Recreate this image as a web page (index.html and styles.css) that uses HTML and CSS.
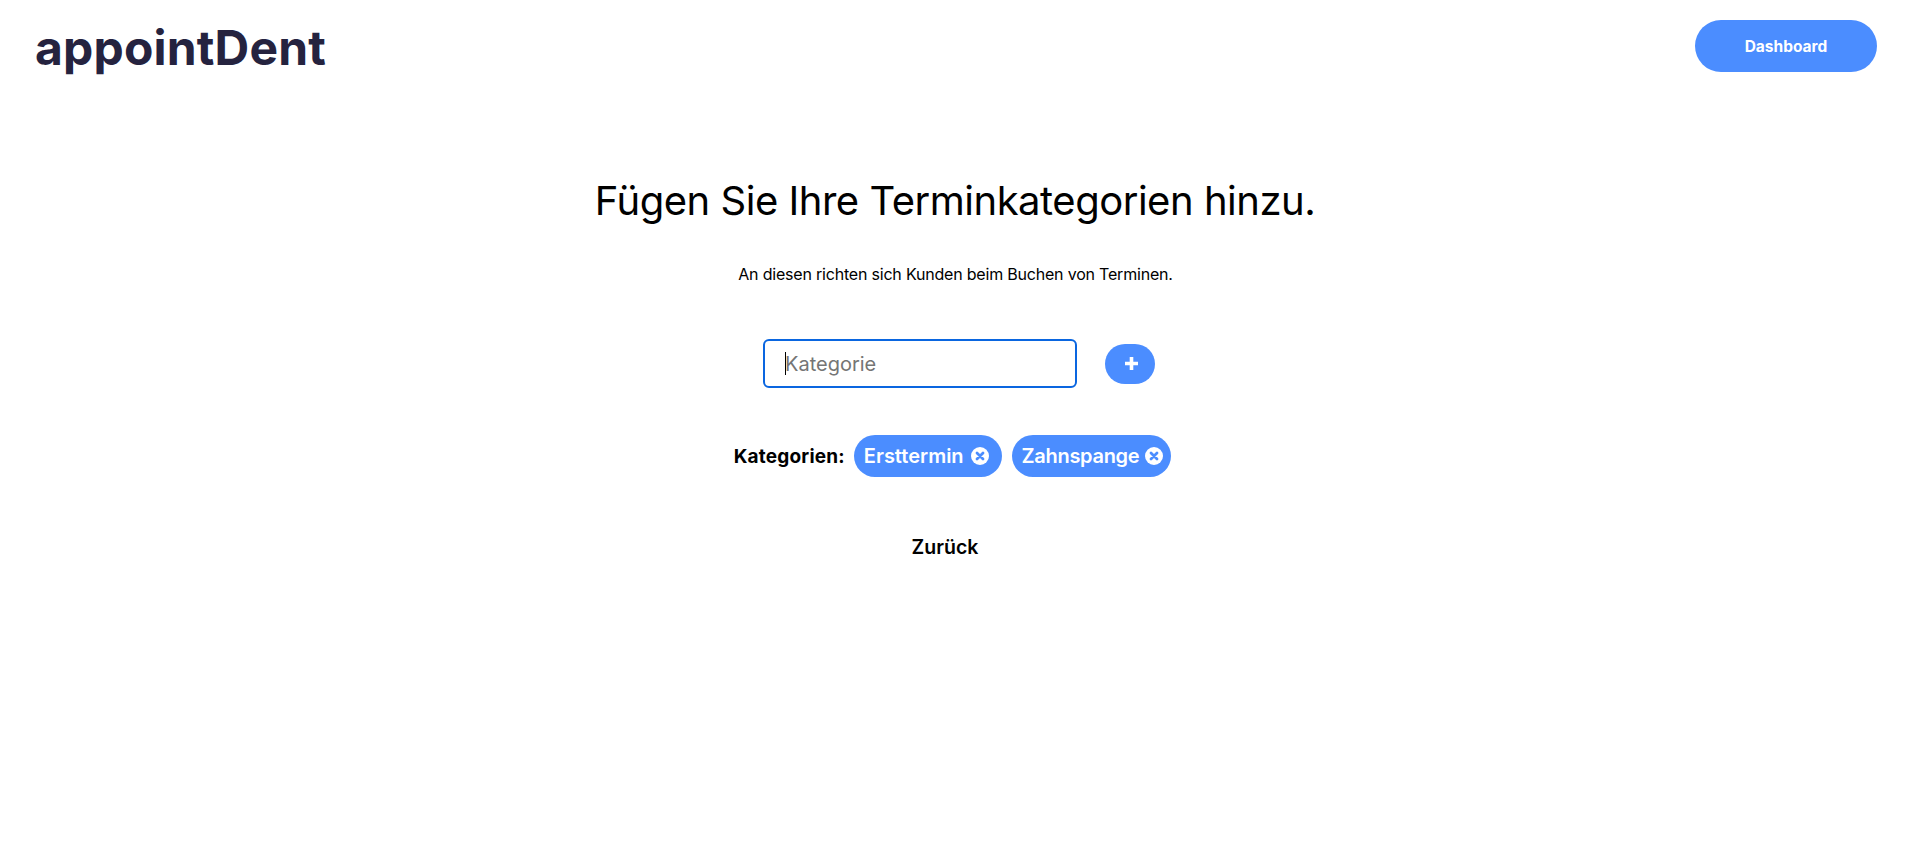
FILE: index.html
```html
<!DOCTYPE html>
<html lang="de">
<head>
  <meta charset="UTF-8" />
  <title>appointDent</title>
  <link rel="stylesheet" href="styles.css">
</head>
<body>

  <header class="topbar">
    <a class="logo" href="#">appointDent</a>
    <button class="dashboard-btn">Dashboard</button>
  </header>

  <main class="content">
    <h1>Fügen Sie Ihre Terminkategorien hinzu.</h1>
    <p class="subtitle">An diesen richten sich Kunden beim Buchen von Terminen.</p>

    <div class="add-row">
      <div class="input-wrap">
        <input class="category-input" type="text" placeholder="Kategorie">
        <span class="caret"></span>
      </div>
      <button class="add-btn" aria-label="Hinzufügen">
        <svg width="13" height="13" viewBox="0 0 13 13"><path d="M6.5 0v13M0 6.500h13" stroke="#fff" stroke-width="3.6" fill="none"/></svg>
      </button>
    </div>

    <div class="chips">
      <span class="chips-label">Kategorien:</span>
      <span class="chip">Ersttermin
        <svg class="chip-x" width="18" height="18" viewBox="0 0 18 18"><circle cx="9" cy="9" r="9" fill="#fff"/><path d="M6 6l6 6M12 6l-6 6" stroke="#4b8dff" stroke-width="2.8" stroke-linecap="round"/></svg>
      </span>
      <span class="chip chip-tight">Zahnspange
        <svg class="chip-x" width="18" height="18" viewBox="0 0 18 18"><circle cx="9" cy="9" r="9" fill="#fff"/><path d="M6 6l6 6M12 6l-6 6" stroke="#4b8dff" stroke-width="2.8" stroke-linecap="round"/></svg>
      </span>
    </div>

    <a class="back-link" href="#">Zurück</a>
  </main>

</body>
</html>
```

FILE: styles.css
```css
body {
  font-family: Inter, 'Noto Sans', sans-serif;
  margin: 0;
  background: #fff;
  color: #000;
}
.topbar {
  display: flex;
  justify-content: space-between;
  align-items: flex-start;
  padding: 20px 38px 0 35px;
}
.logo {
  color: #25233f;
  font-size: 48px;
  line-height: 56px;
  font-weight: 700;
  letter-spacing: 0.17px;
  text-decoration: none;
}
.dashboard-btn {
  width: 182px;
  height: 52px;
  background: #4b8dff;
  color: #fff;
  border: none;
  border-radius: 26px;
  font: 700 15.5px Inter, sans-serif;
}
.content {
  display: flex;
  flex-direction: column;
  align-items: center;
}
h1 {
  margin: 100px 5px 0 0;
  font-size: 40px;
  line-height: 50px;
  font-weight: 400;
  letter-spacing: -0.48px;
}
.subtitle {
  margin: 37px 4px 0 0;
  font-size: 16px;
  line-height: 22px;
  letter-spacing: -0.2px;
}
.add-row {
  display: flex;
  align-items: center;
  gap: 28px;
  margin: 54px 0 0 3px;
}
.input-wrap {
  position: relative;
}
.category-input {
  display: block;
  box-sizing: border-box;
  width: 314px;
  height: 49px;
  padding: 0 20px;
  border: 2px solid #0a66e0;
  border-radius: 6px;
  font: 400 20px Inter, sans-serif;
  outline: none;
}
.category-input::placeholder {
  color: #757575;
}
.caret {
  position: absolute;
  left: 22px;
  top: 13px;
  width: 1px;
  height: 23px;
  background: #000;
}
.add-btn {
  display: flex;
  align-items: center;
  justify-content: center;
  width: 50px;
  height: 40px;
  padding: 0 0 0 3px;
  background: #4b8dff;
  border: none;
  border-radius: 20px;
}
.chips {
  display: flex;
  align-items: center;
  gap: 10px;
  margin: 47px 0 0 -10px;
}
.chips-label {
  font-size: 19px;
  font-weight: 700;
  letter-spacing: 0.2px;
  margin-right: -1px;
}
.chip {
  display: flex;
  align-items: center;
  gap: 7px;
  height: 42px;
  padding: 0 13px 0 10px;
  background: #4b8dff;
  color: #fff;
  border-radius: 21px;
  font-size: 20px;
  font-weight: 600;
}
.chip-tight {
  gap: 6px;
  padding-right: 8px;
  letter-spacing: -0.3px;
}
.back-link {
  margin: 57px 25px 0 0;
  color: #000;
  font-size: 19.5px;
  line-height: 26px;
  font-weight: 600;
  text-decoration: none;
}
```
